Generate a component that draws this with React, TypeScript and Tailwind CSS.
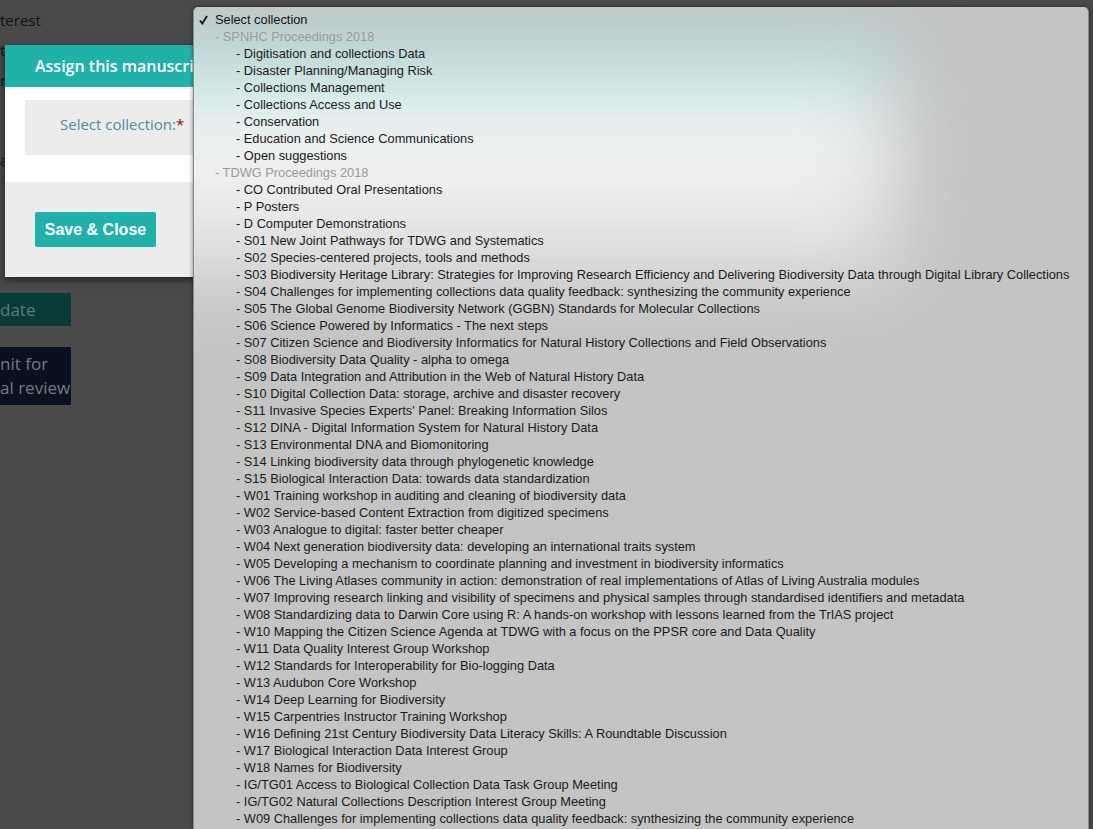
import React from "react";

const spnhc = [
  "Digitisation and collections Data",
  "Disaster Planning/Managing Risk",
  "Collections Management",
  "Collections Access and Use",
  "Conservation",
  "Education and Science Communications",
  "Open suggestions",
];

const tdwg = [
  "CO Contributed Oral Presentations",
  "P Posters",
  "D Computer Demonstrations",
  "S01 New Joint Pathways for TDWG and Systematics",
  "S02 Species-centered projects, tools and methods",
  "S03 Biodiversity Heritage Library: Strategies for Improving Research Efficiency and Delivering Biodiversity Data through Digital Library Collections",
  "S04 Challenges for implementing collections data quality feedback: synthesizing the community experience",
  "S05 The Global Genome Biodiversity Network (GGBN) Standards for Molecular Collections",
  "S06 Science Powered by Informatics - The next steps",
  "S07 Citizen Science and Biodiversity Informatics for Natural History Collections and Field Observations",
  "S08 Biodiversity Data Quality - alpha to omega",
  "S09 Data Integration and Attribution in the Web of Natural History Data",
  "S10 Digital Collection Data: storage, archive and disaster recovery",
  "S11 Invasive Species Experts' Panel: Breaking Information Silos",
  "S12 DINA - Digital Information System for Natural History Data",
  "S13 Environmental DNA and Biomonitoring",
  "S14 Linking biodiversity data through phylogenetic knowledge",
  "S15 Biological Interaction Data: towards data standardization",
  "W01 Training workshop in auditing and cleaning of biodiversity data",
  "W02 Service-based Content Extraction from digitized specimens",
  "W03 Analogue to digital: faster better cheaper",
  "W04 Next generation biodiversity data: developing an international traits system",
  "W05 Developing a mechanism to coordinate planning and investment in biodiversity informatics",
  "W06 The Living Atlases community in action: demonstration of real implementations of Atlas of Living Australia modules",
  "W07 Improving research linking and visibility of specimens and physical samples through standardised identifiers and metadata",
  "W08 Standardizing data to Darwin Core using R: A hands-on workshop with lessons learned from the TrIAS project",
  "W10 Mapping the Citizen Science Agenda at TDWG with a focus on the PPSR core and Data Quality",
  "W11 Data Quality Interest Group Workshop",
  "W12 Standards for Interoperability for Bio-logging Data",
  "W13 Audubon Core Workshop",
  "W14 Deep Learning for Biodiversity",
  "W15 Carpentries Instructor Training Workshop",
  "W16 Defining 21st Century Biodiversity Data Literacy Skills: A Roundtable Discussion",
  "W17 Biological Interaction Data Interest Group",
  "W18 Names for Biodiversity",
  "IG/TG01 Access to Biological Collection Data Task Group Meeting",
  "IG/TG02 Natural Collections Description Interest Group Meeting",
  "W09 Challenges for implementing collections data quality feedback: synthesizing the community experience",
];

const GroupLabel = ({ label }: { label: string }) => (
  <div className="h-[17px] pl-[21px] leading-[17px] text-[#9a9a9a] whitespace-nowrap">- {label}</div>
);

const Option = ({ label }: { label: string }) => (
  <div className="h-[17px] pl-[42px] leading-[17px] text-[#1a1a1a] whitespace-nowrap">- {label}</div>
);

const App = () => {
  return (
    <div className="relative h-[829px] w-[1093px] overflow-hidden bg-[#4a4a4a] font-['Open_Sans',sans-serif]">
      {/* page behind the overlay */}
      <div className="flex flex-col text-[15px] text-[#141414]">
        <div className="h-[30px] pt-[5px] leading-[30px]">terest</div>
        <div className="h-[30px] pt-[5px] leading-[30px]">t</div>
        <div className="h-[30px] pt-[5px] leading-[30px]">r</div>
        <div className="mt-[55px] h-[30px] leading-[30px]">a</div>
        <div className="mt-[118px] flex h-[33px] w-[71px] items-center bg-[#083a37] text-[17px] text-[#5f7d7b]">date</div>
        <div className="mt-[21px] flex h-[58px] w-[71px] flex-col justify-center bg-[#0a1020] text-[17px] leading-[24px] text-[#777a80]">
          <span>nit for</span>
          <span>al review</span>
        </div>
      </div>

      {/* modal */}
      <div className="absolute left-[5px] top-[45px] w-[885px] shadow-[0_3px_8px_rgba(0,0,0,0.55)]">
        <div className="flex h-[42px] items-center bg-[#20b2aa] pl-[30px] text-[16px] font-semibold text-white shadow-[0_1px_2px_rgba(0,0,0,0.15)]">
          Assign this manuscript to a collection
        </div>
        <div className="bg-white px-[20px] pb-[27px] pt-[13px]">
          <div className="flex h-[55px] items-center bg-[#ececec] pb-[6px] pl-[35px] text-[15px] text-[#4d8aa5]">
            Select collection:<span className="text-[#8b0d0d]">*</span>
          </div>
        </div>
        <div className="h-[95px] bg-[#ececec] px-[30px] pt-[30px]">
          <button className="h-[35px] w-[121px] rounded-[2px] bg-[#20b2aa] font-['Liberation_Sans',sans-serif] text-[16px] font-bold text-white">
            Save &amp; Close
          </button>
        </div>
      </div>

      {/* native select menu: translucent, modal blurred beneath */}
      <div className="absolute bottom-0 left-[193px] right-[4px] top-[7px] grid overflow-hidden rounded-t-[5px] border-x border-[#8a8a8a] bg-[#c4c4c4] font-['Liberation_Sans',sans-serif] text-[12.8px] shadow-[0_0_4px_rgba(0,0,0,0.5)]">
        <div aria-hidden className="[grid-area:1/1] -ml-[150px] mt-[34px] flex w-[850px] flex-col self-start blur-[42px]">
          <div className="h-[46px] bg-[#a9e2de]" />
          <div className="h-[95px] bg-[#f3f3f3]" />
          <div className="h-[90px] bg-[#e8e8e8]" />
        </div>
        <div className="[grid-area:1/1] relative pt-[4px]">
          <div className="relative h-[17px] pl-[21px] leading-[17px] text-[#111]">
            <svg className="absolute left-[5px] top-[4px]" width="9" height="10" viewBox="0 0 9 10">
              <path d="M1 5.5 L3.3 8.5 L8 1" fill="none" stroke="#111" strokeWidth="1.8" />
            </svg>
            Select collection
          </div>
          <GroupLabel label="SPNHC Proceedings 2018" />
          {spnhc.map((s) => (
            <Option key={s} label={s} />
          ))}
          <GroupLabel label="TDWG Proceedings 2018" />
          {tdwg.map((s) => (
            <Option key={s} label={s} />
          ))}
        </div>
      </div>
    </div>
  );
};

export default App;
